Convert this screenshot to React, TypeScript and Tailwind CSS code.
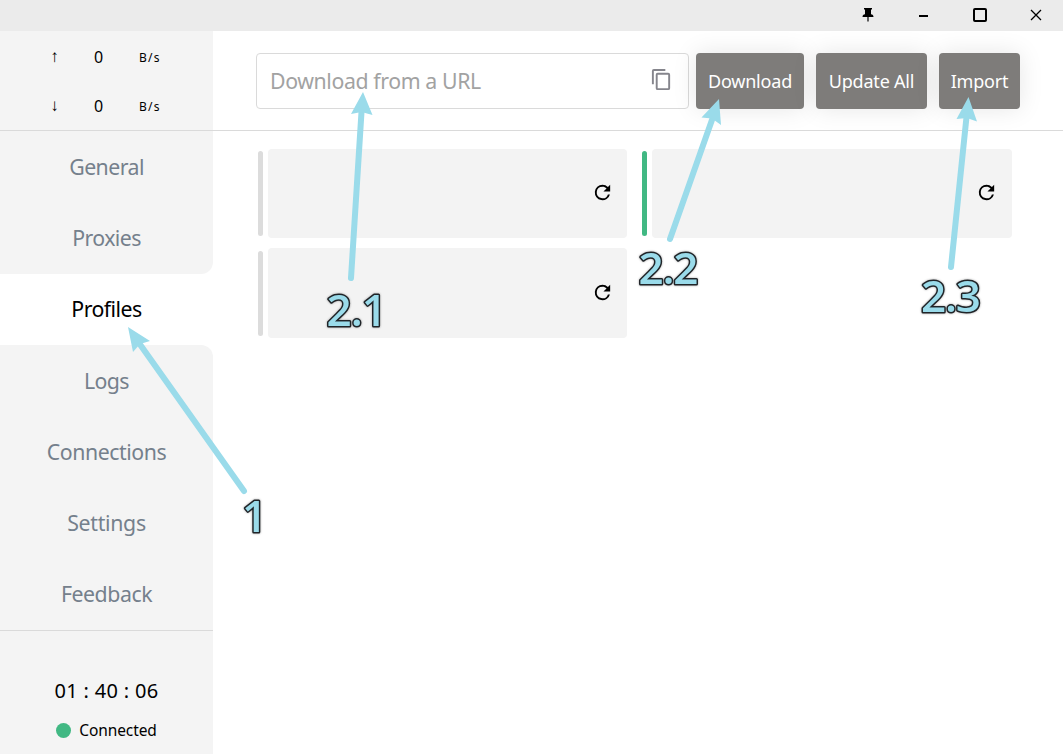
import React from "react";

const nav = [
  { label: "General", cls: "bg-[#f4f4f4] text-[#75808c] tracking-[-0.55px]" },
  { label: "Proxies", cls: "bg-[#f4f4f4] text-[#75808c] rounded-br-xl tracking-[-0.6px]" },
  { label: "Profiles", cls: "bg-white text-black tracking-[-0.55px]" },
  { label: "Logs", cls: "bg-[#f4f4f4] text-[#75808c] rounded-tr-xl tracking-[-0.6px]" },
  { label: "Connections", cls: "bg-[#f4f4f4] text-[#75808c] tracking-[-0.45px]" },
  { label: "Settings", cls: "bg-[#f4f4f4] text-[#75808c] tracking-[-0.3px]" },
  { label: "Feedback", cls: "bg-[#f4f4f4] text-[#75808c] tracking-[-0.45px]" },
];

function TitleBar() {
  return (
    <header className="flex h-[31px] shrink-0 justify-end bg-[#ebebeb]">
      <div className="flex w-14 items-center justify-center">
        <svg width="12" height="16" viewBox="0 0 12 16" className="mt-[-2px] ml-px">
          <path d="M2 1h8v1.6H9V7.3c1.600.3 2.400 1 2.500 2.700H6.600v4.500H5.400V10H.5C.6 8.300 1.400 7.600 3 7.300V2.600H2z" />
        </svg>
      </div>
      <div className="flex w-14 items-center justify-center">
        <span className="ml-px h-[2px] w-[9px] bg-black" />
      </div>
      <div className="flex w-14 items-center justify-center">
        <span className="mt-[-1px] ml-px h-[14px] w-[14px] rounded-[2px] border-2 border-black" />
      </div>
      <div className="flex w-14 items-center justify-center">
        <svg width="12" height="12" viewBox="0 0 12 12" fill="none" stroke="#000" strokeWidth="1.3" className="ml-[2px] mt-[-1px]">
          <path d="M1 1l10 10M11 1L1 11" />
        </svg>
      </div>
    </header>
  );
}

function Traffic({ arrow }: { arrow: string }) {
  return (
    <div className="flex h-[49px] items-center text-black">
      <span className="ml-[46px] w-[17px] text-center font-['Liberation_Sans'] text-[17px]">{arrow}</span>
      <span className="ml-[25px] w-[21px] text-center text-[16px]">0</span>
      <span className="ml-[30px] mt-[2px] text-[12px] tracking-[1.3px]">B/s</span>
    </div>
  );
}

function Sidebar() {
  return (
    <aside className="flex w-[213px] shrink-0 flex-col">
      <div className="flex h-[100px] shrink-0 flex-col border-b border-[#dadada] bg-[#f4f4f4] pt-px">
        <Traffic arrow="↑" />
        <Traffic arrow="↓" />
      </div>
      <nav className="flex h-[499px] shrink-0 flex-col">
        {nav.map((n) => (
          <a key={n.label} className={"flex flex-1 items-center justify-center text-[21.3px] " + n.cls}>
            {n.label}
          </a>
        ))}
      </nav>
      <div className="flex flex-1 flex-col items-center border-t border-[#dadada] bg-[#f4f4f4] pt-[45px] text-black">
        <div className="h-[30px] text-[20px] leading-[30px] tracking-[0.3px]">01 : 40 : 06</div>
        <div className="mt-[13px] flex h-6 items-center gap-2 text-[15.5px]">
          <span className="mt-[-1px] h-[15px] w-[15px] rounded-full bg-[#41b883]" />
          <span className="tracking-[-0.1px]">Connected</span>
        </div>
      </div>
    </aside>
  );
}

function ActionButton({ label, cls }: { label: string; cls: string }) {
  return (
    <button
      className={
        "flex h-14 items-center justify-center rounded-[4px] bg-[#7e7c7a] pt-px text-[18px] tracking-[-0.2px] text-white shadow-[0_0_24px_rgba(0,0,0,0.1)] " +
        cls
      }
    >
      {label}
    </button>
  );
}

function Profile({ active = false, cls, pad }: { active?: boolean; cls: string; pad: string }) {
  return (
    <div className={"flex items-center " + cls}>
      <span className={"mr-[5px] h-[85px] w-[5px] rounded-[3px] " + (active ? "bg-[#41b883]" : "bg-[#dcdcdc]")} />
      <div className={"flex h-full flex-1 items-center justify-end rounded-[4px] bg-[#f3f3f3] " + pad}>
        <svg width="23" height="23" viewBox="0 0 24 24">
          <path d="M17.65 6.35A7.96 7.96 0 0 0 12 4a8 8 0 1 0 7.730 10h-2.080A6 6 0 1 1 12 6c1.660 0 3.140.69 4.220 1.780L13 11h7V4z" />
        </svg>
      </div>
    </div>
  );
}

function Main() {
  return (
    <main className="flex flex-1 flex-col bg-white">
      <div className="flex h-[100px] shrink-0 border-b border-[#dadada] pt-[22px] pl-[43px]">
        <div className="mr-[7px] flex h-14 w-[433px] items-center justify-between rounded-[4px] border border-[#dadada] pr-[15px] pl-[13px]">
          <span className="text-[21.3px] tracking-[-0.4px] text-[#a2a2a2]">Download from a URL</span>
          <svg width="23" height="23" viewBox="0 0 24 24" fill="#85858c" className="mb-[3px]">
            <path d="M16 1H4a2 2 0 0 0-2 2v14h2V3h12zm3 4H8a2 2 0 0 0-2 2v14a2 2 0 0 0 2 2h11a2 2 0 0 0 2-2V7a2 2 0 0 0-2-2m0 16H8V7h11z" />
          </svg>
        </div>
        <ActionButton label="Download" cls="w-[108px] mr-3" />
        <ActionButton label="Update All" cls="w-[111px] mr-3" />
        <ActionButton label="Import" cls="w-[81px]" />
      </div>
      <div className="grid grid-cols-[369px_370px] gap-x-[15px] gap-y-[10px] pt-[18px] pl-[45px]">
        <Profile cls="h-[89px]" pad="pr-[13px] pb-[3px]" />
        <Profile cls="h-[89px]" pad="pr-[14px] pb-[3px]" active />
        <Profile cls="h-[90px]" pad="pr-[13px] pb-px" />
      </div>
    </main>
  );
}

function Annotations() {
  return (
    <svg className="pointer-events-none absolute inset-0" width="1063" height="754" viewBox="0 0 1063 754">
      <g stroke="#9adbea" strokeWidth="6" strokeLinecap="round">
        <path d="M351 278L361.500 112" />
        <path d="M670 239L713 117" />
        <path d="M951 267L966.500 117" />
        <path d="M244 491L139 343" />
      </g>
      <g fill="#9adbea">
        <path d="M363 92L372.500 115L361.500 112L351 114z" />
        <path d="M719 99L721 125L712 118.500L701.500 117.500z" />
        <path d="M968.500 97L977 121.500L967 118L956.500 119z" />
        <path d="M128 327L150 341L140 344L133 352z" />
      </g>
      <g
        fill="#9adbea"
        stroke="#202428"
        strokeWidth="3"
        strokeLinejoin="round"
        paintOrder="stroke"
        fontSize="44"
        className="font-['Open_Sans'] font-semibold [filter:drop-shadow(0_0_1px_rgba(0,0,0,0.35))]"
      >
        <text x="326.500" y="326" textLength="60.500">2.1</text>
        <text x="638.500" y="284" textLength="60">2.2</text>
        <text x="921" y="312" textLength="60">2.3</text>
        <text x="242" y="532">1</text>
      </g>
    </svg>
  );
}

export default function App() {
  return (
    <div className="relative flex h-[754px] w-[1063px] flex-col overflow-hidden bg-white font-['Noto_Sans','Open_Sans',sans-serif]">
      <TitleBar />
      <div className="flex min-h-0 flex-1">
        <Sidebar />
        <Main />
      </div>
      <Annotations />
    </div>
  );
}
